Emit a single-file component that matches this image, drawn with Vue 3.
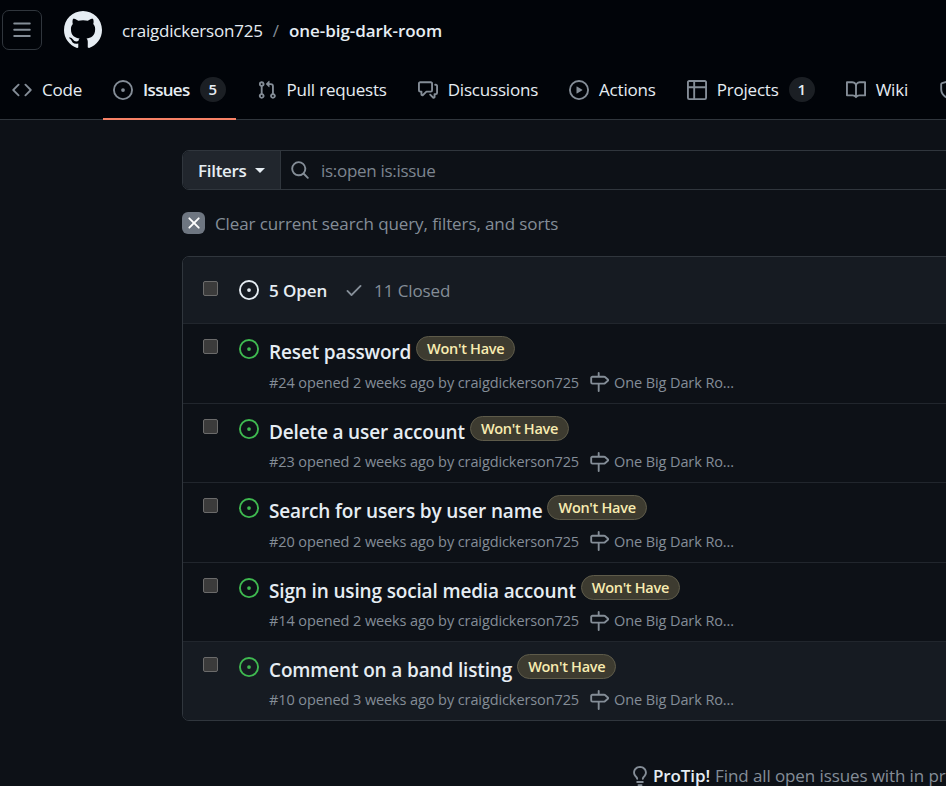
<template>
  <div class="page">
    <header class="topbar">
      <button class="menu-btn">
        <svg class="icon" viewBox="0 0 16 16"><path :d="icons.bars" /></svg>
      </button>
      <svg class="logo" viewBox="0 0 16 16"><path :d="icons.github" /></svg>
      <span class="owner">craigdickerson725</span>
      <span class="slash">/</span>
      <span class="repo">one-big-dark-room</span>
    </header>

    <nav class="tabs">
      <a v-for="tab in tabs" :key="tab.label" class="tab" :class="{ active: tab.active }">
        <svg class="icon muted" viewBox="0 0 16 16"><path v-for="d in tab.icon" :key="d" :d="d" /></svg>
        <span class="tab-label">{{ tab.label }}</span>
        <span v-if="tab.count" class="counter">{{ tab.count }}</span>
      </a>
    </nav>

    <main class="content">
      <div class="filter-bar">
        <button class="filters">Filters <i class="caret"></i></button>
        <div class="search">
          <svg class="icon muted" viewBox="0 0 16 16"><path :d="icons.search" /></svg>
          <span>is:open is:issue</span>
        </div>
      </div>

      <div class="clear">
        <span class="clear-x">
          <svg viewBox="0 0 16 16"><path :d="icons.x" /></svg>
        </span>
        <span>Clear current search query, filters, and sorts</span>
      </div>

      <section class="box">
        <div class="box-head">
          <span class="check"></span>
          <svg class="icon white" viewBox="0 0 16 16"><path v-for="d in icons.issue" :key="d" :d="d" /></svg>
          <span class="open-count">5 Open</span>
          <svg class="icon muted check-icon" viewBox="0 0 16 16"><path :d="icons.check" /></svg>
          <span class="closed-count">11 Closed</span>
        </div>

        <div v-for="issue in issues" :key="issue.id" class="row" :class="{ last: issue.id === 10 }">
          <span class="check"></span>
          <svg class="icon green" viewBox="0 0 16 16"><path v-for="d in icons.issue" :key="d" :d="d" /></svg>
          <div class="row-main">
            <div class="row-title">
              <span class="title">{{ issue.title }}</span>
              <span class="label">Won't Have</span>
            </div>
            <div class="meta">
              <span>#{{ issue.id }} opened {{ issue.age }} ago by craigdickerson725</span>
              <svg class="icon muted" viewBox="0 0 16 16"><path :d="icons.milestone" /></svg>
              <span class="milestone">One Big Dark Ro...</span>
            </div>
          </div>
        </div>
      </section>

      <p class="tip">
        <svg class="icon muted" viewBox="0 0 16 16"><path :d="icons.bulb" /></svg>
        <strong>ProTip!</strong> Find all open issues with in progress development work
      </p>
    </main>
  </div>
</template>

<script setup>
const icons = {
  bars: "M1 2.75A.75.75 0 0 1 1.75 2h12.5a.75.75 0 0 1 0 1.5H1.75A.75.75 0 0 1 1 2.75Zm0 5A.75.75 0 0 1 1.75 7h12.5a.75.75 0 0 1 0 1.5H1.75A.75.75 0 0 1 1 7.75ZM1.75 12h12.5a.75.75 0 0 1 0 1.5H1.75a.75.75 0 0 1 0-1.5Z",
  github: "M8 0c4.42 0 8 3.58 8 8a8.013 8.013 0 0 1-5.45 7.59c-.4.08-.55-.17-.55-.38 0-.27.01-1.13.01-2.2 0-.75-.25-1.23-.54-1.48 1.78-.2 3.65-.88 3.65-3.95 0-.88-.31-1.59-.82-2.15.08-.2.36-1.02-.08-2.12 0 0-.67-.22-2.2.82-.64-.18-1.32-.27-2-.27-.68 0-1.36.09-2 .27-1.53-1.03-2.2-.82-2.2-.82-.44 1.1-.16 1.92-.08 2.12-.51.56-.82 1.28-.82 2.15 0 3.06 1.86 3.75 3.64 3.95-.23.2-.44.55-.51 1.07-.46.21-1.61.55-2.33-.66-.15-.24-.6-.83-1.23-.82-.67.01-.27.38.01.53.34.19.73.9.82 1.13.16.45.68 1.31 2.69.94 0 .67.01 1.3.01 1.49 0 .21-.15.45-.55.38A7.995 7.995 0 0 1 0 8c0-4.42 3.58-8 8-8Z",
  search: "M10.68 11.74a6 6 0 0 1-7.922-8.982 6 6 0 0 1 8.982 7.922l3.04 3.04a.749.749 0 0 1-.326 1.275.749.749 0 0 1-.734-.215ZM11.5 7a4.499 4.499 0 1 0-8.997 0A4.499 4.499 0 0 0 11.5 7Z",
  x: "M3.72 3.72a.75.75 0 0 1 1.06 0L8 6.94l3.22-3.22a.749.749 0 0 1 1.275.326.749.749 0 0 1-.215.734L9.06 8l3.22 3.22a.749.749 0 0 1-.326 1.275.749.749 0 0 1-.734-.215L8 9.06l-3.22 3.22a.751.751 0 0 1-1.042-.018.751.751 0 0 1-.018-1.042L6.94 8 3.72 4.78a.75.75 0 0 1 0-1.06Z",
  check: "M13.78 4.22a.75.75 0 0 1 0 1.06l-7.25 7.25a.75.75 0 0 1-1.06 0L2.22 9.28a.751.751 0 0 1 .018-1.042.751.751 0 0 1 1.042-.018L6 10.94l6.72-6.72a.75.75 0 0 1 1.06 0Z",
  issue: [
    "M8 9.5a1.5 1.5 0 1 0 0-3 1.5 1.5 0 0 0 0 3Z",
    "M8 0a8 8 0 1 1 0 16A8 8 0 0 1 8 0ZM1.5 8a6.5 6.5 0 1 0 13 0 6.5 6.5 0 0 0-13 0Z",
  ],
  milestone: "M7.75 0a.75.75 0 0 1 .75.75V3h3.634c.414 0 .814.147 1.13.414l2.07 1.75a1.75 1.75 0 0 1 0 2.672l-2.07 1.75a1.75 1.75 0 0 1-1.13.414H8.5v5.25a.75.75 0 0 1-1.5 0V10H2.75A1.75 1.75 0 0 1 1 8.25v-3.5C1 3.784 1.784 3 2.75 3H7V.75A.75.75 0 0 1 7.75 0Zm4.384 8.5a.25.25 0 0 0 .161-.06l2.07-1.75a.248.248 0 0 0 0-.38l-2.07-1.75a.25.25 0 0 0-.161-.06H2.75a.25.25 0 0 0-.25.25v3.5c0 .138.112.25.25.25h9.384Z",
  bulb: "M8 1.5c-2.363 0-4 1.69-4 3.75 0 .984.424 1.625.984 2.304l.214.253c.223.264.47.556.673.848.284.411.537.896.621 1.49a.75.75 0 0 1-1.484.211c-.04-.282-.163-.547-.37-.847a8.456 8.456 0 0 0-.542-.68c-.084-.1-.173-.205-.268-.32C3.201 7.75 2.5 6.766 2.5 5.25 2.5 2.31 4.863 0 8 0s5.5 2.31 5.5 5.25c0 1.516-.701 2.5-1.328 3.259-.095.115-.184.22-.268.319-.207.245-.383.453-.541.681-.208.3-.33.565-.37.847a.751.751 0 0 1-1.485-.212c.084-.593.337-1.078.621-1.489.203-.292.45-.584.673-.848.075-.088.147-.173.213-.253.561-.679.985-1.32.985-2.304 0-2.06-1.637-3.75-4-3.75ZM5.75 12h4.5a.75.75 0 0 1 0 1.5h-4.5a.75.75 0 0 1 0-1.5ZM6 15.25a.75.75 0 0 1 .75-.75h2.5a.75.75 0 0 1 0 1.5h-2.5a.75.75 0 0 1-.75-.75Z",
};

const tabs = [
  { label: "Code", icon: ["M11.28 3.22a.75.75 0 0 0-1.06 1.06L13.94 8l-3.72 3.72a.75.75 0 1 0 1.06 1.06l4.25-4.25a.75.75 0 0 0 0-1.06Zm-6.56 0a.75.75 0 0 1 1.06 1.06L2.06 8l3.72 3.72a.75.75 0 0 1-1.06 1.06L.47 8.53a.75.75 0 0 1 0-1.06Z"] },
  { label: "Issues", icon: icons.issue, count: 5, active: true },
  { label: "Pull requests", icon: ["M1.5 3.25a2.25 2.25 0 1 1 3 2.122v5.256a2.251 2.251 0 1 1-1.5 0V5.372A2.25 2.25 0 0 1 1.5 3.25Zm5.677-.177L9.573.677A.25.25 0 0 1 10 .854V2.5h1A2.5 2.5 0 0 1 13.5 5v5.628a2.251 2.251 0 1 1-1.5 0V5a1 1 0 0 0-1-1h-1v1.646a.25.25 0 0 1-.427.177L7.177 3.427a.25.25 0 0 1 0-.354ZM3.75 2.5a.75.75 0 1 0 0 1.5.75.75 0 0 0 0-1.5Zm0 9.5a.75.75 0 1 0 0 1.5.75.75 0 0 0 0-1.5Zm8.25.75a.75.75 0 1 0 1.5 0 .75.75 0 0 0-1.5 0Z"] },
  { label: "Discussions", icon: ["M1.75 1h8.5c.966 0 1.75.784 1.75 1.75v5.5A1.75 1.75 0 0 1 10.25 10H7.061l-2.574 2.573A1.458 1.458 0 0 1 2 11.543V10h-.25A1.75 1.75 0 0 1 0 8.25v-5.5C0 1.784.784 1 1.75 1ZM1.5 2.75v5.5c0 .138.112.25.25.25h1a.75.75 0 0 1 .75.75v2.19l2.72-2.72a.749.749 0 0 1 .53-.22h3.5a.25.25 0 0 0 .25-.25v-5.5a.25.25 0 0 0-.25-.25h-8.5a.25.25 0 0 0-.25.25Zm13 2a.25.25 0 0 0-.25-.25h-.5a.75.75 0 0 1 0-1.5h.5c.966 0 1.75.784 1.75 1.75v5.5A1.75 1.75 0 0 1 14.25 12H14v1.543a1.458 1.458 0 0 1-2.487 1.03L9.22 12.28a.749.749 0 0 1 .326-1.275.749.749 0 0 1 .734.215l2.22 2.22v-2.19a.75.75 0 0 1 .75-.75h1a.25.25 0 0 0 .25-.25Z"] },
  { label: "Actions", icon: ["M8 0a8 8 0 1 1 0 16A8 8 0 0 1 8 0ZM1.5 8a6.5 6.5 0 1 0 13 0 6.5 6.5 0 0 0-13 0Zm4.879-2.773 4.264 2.559a.25.25 0 0 1 0 .428l-4.264 2.559A.25.25 0 0 1 6 10.559V5.442a.25.25 0 0 1 .379-.215Z"] },
  { label: "Projects", icon: ["M0 1.75C0 .784.784 0 1.75 0h12.5C15.216 0 16 .784 16 1.75v12.5A1.75 1.75 0 0 1 14.25 16H1.75A1.75 1.75 0 0 1 0 14.25ZM6.5 6.5v8h7.75a.25.25 0 0 0 .25-.25V6.5Zm8-1.5V1.75a.25.25 0 0 0-.25-.25H6.5V5Zm-13 1.5v7.75c0 .138.112.25.25.25H5v-8ZM5 5V1.5H1.75a.25.25 0 0 0-.25.25V5Z"], count: 1 },
  { label: "Wiki", icon: ["M0 1.75A.75.75 0 0 1 .75 1h4.253c1.227 0 2.317.59 3 1.501A3.743 3.743 0 0 1 11.006 1h4.245a.75.75 0 0 1 .75.75v10.5a.75.75 0 0 1-.75.75h-4.507a2.25 2.25 0 0 0-1.591.659l-.622.621a.75.75 0 0 1-1.06 0l-.622-.621A2.25 2.25 0 0 0 5.258 13H.75a.75.75 0 0 1-.75-.75Zm7.251 10.324.004-5.073-.002-2.253A2.25 2.25 0 0 0 5.003 2.5H1.5v9h3.757a3.75 3.75 0 0 1 1.994.574ZM8.755 4.75l-.004 7.322a3.752 3.752 0 0 1 1.992-.572H14.5v-9h-3.495a2.25 2.25 0 0 0-2.25 2.25Z"] },
  { label: "Security", icon: ["M7.467.133a1.748 1.748 0 0 1 1.066 0l5.25 1.68A1.75 1.75 0 0 1 15 3.48V7c0 1.566-.32 3.182-1.303 4.682-.983 1.498-2.585 2.813-5.032 3.855a1.697 1.697 0 0 1-1.33 0c-2.447-1.042-4.049-2.357-5.032-3.855C1.32 10.182 1 8.566 1 7V3.48a1.75 1.75 0 0 1 1.217-1.667Zm.61 1.429a.25.25 0 0 0-.153 0l-5.25 1.68a.25.25 0 0 0-.174.238V7c0 1.358.275 2.666 1.057 3.86.784 1.194 2.121 2.34 4.366 3.297a.196.196 0 0 0 .154 0c2.245-.956 3.582-2.104 4.366-3.298C13.225 9.666 13.5 8.36 13.5 7V3.48a.251.251 0 0 0-.174-.237l-5.25-1.68ZM8.75 4.75v3a.75.75 0 0 1-1.5 0v-3a.75.75 0 0 1 1.5 0ZM9 10.5a1 1 0 1 1-2 0 1 1 0 0 1 2 0Z"] },
];

const issues = [
  { id: 24, title: "Reset password", age: "2 weeks" },
  { id: 23, title: "Delete a user account", age: "2 weeks" },
  { id: 20, title: "Search for users by user name", age: "2 weeks" },
  { id: 14, title: "Sign in using social media account", age: "2 weeks" },
  { id: 10, title: "Comment on a band listing", age: "3 weeks" },
];
</script>

<style>
html,
body {
  margin: 0;
  background: #0d1117;
  overflow: hidden;
}
</style>

<style scoped>
.page {
  width: 946px;
  height: 786px;
  overflow: hidden;
  background: #0d1117;
  color: #e6edf3;
  font-family: "Open Sans", "Noto Sans", sans-serif;
  font-size: 17px;
  letter-spacing: -0.1px;
}

.icon {
  width: 20px;
  height: 20px;
  flex: none;
  fill: currentColor;
}
.muted { color: #848d97; }
.white { color: #e6edf3; }
.green { color: #3fb950; }

.topbar {
  display: flex;
  align-items: center;
  height: 60px;
  padding-left: 2px;
  background: #010409;
}
.menu-btn {
  display: flex;
  align-items: center;
  justify-content: center;
  width: 40px;
  height: 40px;
  padding: 0;
  color: #848d97;
  background: none;
  border: 1px solid #30363d;
  border-radius: 7px;
}
.logo {
  width: 38px;
  height: 38px;
  margin-left: 22px;
  fill: #e6edf3;
}
.owner {
  margin-left: 20px;
  letter-spacing: -0.2px;
}
.slash { margin: 0 10px; color: #848d97; }
.repo {
  font-weight: 600;
  letter-spacing: -0.05px;
}

.tabs {
  display: flex;
  gap: 11px;
  height: 59px;
  padding-left: 2px;
  white-space: nowrap;
  background: #010409;
  border-bottom: 1px solid #30363d;
  letter-spacing: -0.2px;
}
.tab {
  position: relative;
  display: flex;
  align-items: center;
  gap: 10px;
  padding: 0 10px;
  color: #e6edf3;
}
.tab.active {
  font-weight: 600;
  letter-spacing: -0.7px;
}
.tab.active::after {
  content: "";
  position: absolute;
  left: 0;
  right: 0;
  bottom: -1px;
  height: 2px;
  background: #f78166;
}
.counter {
  min-width: 26px;
  height: 25px;
  line-height: 25px;
  text-align: center;
  font-size: 15px;
  font-weight: 600;
  background: #1b1f24;
  border-radius: 13px;
}

.content {
  width: 1100px;
  margin-left: 182px;
  padding-top: 30px;
}

.filter-bar {
  display: flex;
  box-sizing: border-box;
  height: 40px;
  border: 1px solid #30363d;
  border-radius: 7px;
  background: #0d1117;
}
.filters {
  display: flex;
  align-items: center;
  gap: 8px;
  width: 98px;
  padding: 0 15px;
  color: #e6edf3;
  font: inherit;
  font-weight: 600;
  letter-spacing: -0.3px;
  background: #21262d;
  border: 0;
  border-right: 1px solid #30363d;
  border-radius: 6px 0 0 6px;
}
.caret {
  border-top: 5px solid #e6edf3;
  border-left: 5px solid transparent;
  border-right: 5px solid transparent;
}
.search {
  display: flex;
  align-items: center;
  gap: 11px;
  padding-left: 9px;
  color: #7d8590;
  letter-spacing: -0.3px;
}

.clear {
  display: flex;
  align-items: center;
  gap: 10px;
  height: 24px;
  margin-top: 21px;
  color: #848d97;
}
.clear-x {
  display: flex;
  align-items: center;
  justify-content: center;
  width: 23px;
  height: 22px;
  background: #6e7681;
  border-radius: 6px;
}
.clear-x svg {
  width: 20px;
  height: 20px;
  fill: #fff;
}

.box {
  margin-top: 21px;
  border: 1px solid #30363d;
  border-radius: 7px;
  overflow: hidden;
}
.box-head {
  display: flex;
  align-items: center;
  height: 66.4px;
  background: #161b22;
}
.check {
  flex: none;
  box-sizing: border-box;
  width: 15px;
  height: 15px;
  margin: 0 21px 0 20px;
  background: #3b3b3b;
  border: 1px solid #6b6b6b;
  border-radius: 2px;
}
.box-head .check { margin-top: -4px; }
.open-count {
  margin-left: 10px;
  font-weight: 600;
}
.check-icon { margin-left: 17px; }
.closed-count {
  margin-left: 10px;
  color: #848d97;
}

.row {
  display: flex;
  align-items: flex-start;
  box-sizing: border-box;
  height: 79.4px;
  padding-top: 15px;
  border-top: 1px solid #21262d;
}
.row.last { background: #161b22; }
.row .check { margin-top: 0; }
.row-main { margin-left: 10px; }
.row-title {
  display: flex;
  align-items: center;
  gap: 5px;
  height: 28px;
  margin-top: -1px;
}
.title {
  font-size: 19px;
  font-weight: 600;
  letter-spacing: -0.15px;
  color: #e6edf3;
}
.label {
  padding: 0 10px;
  height: 25px;
  line-height: 23px;
  box-sizing: border-box;
  font-size: 14.5px;
  font-weight: 600;
  letter-spacing: -0.3px;
  color: #f8ecb0;
  background: #3d3b30;
  border: 1px solid #5e5b4a;
  border-radius: 13px;
  margin-top: -7px;
}
.meta {
  display: flex;
  align-items: center;
  gap: 10px;
  margin-top: 6px;
  font-size: 14.5px;
  color: #848d97;
}
.milestone { margin-left: -5px; }

.tip {
  display: flex;
  align-items: center;
  gap: 3px;
  margin: 43px 0 0 448px;
  color: #848d97;
  white-space: nowrap;
}
.tip strong {
  margin-right: 2px;
  color: #e6edf3;
  font-weight: 600;
}
</style>
